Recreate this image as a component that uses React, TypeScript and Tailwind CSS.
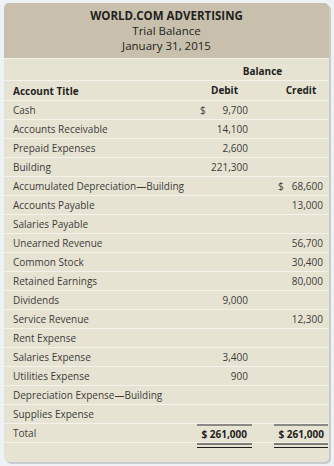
import React from 'react';

type Row = {
  title: string;
  debit?: string;
  credit?: string;
  debitSign?: boolean;
  creditSign?: boolean;
};

const rows: Row[] = [
  { title: 'Cash', debit: '9,700', debitSign: true },
  { title: 'Accounts Receivable', debit: '14,100' },
  { title: 'Prepaid Expenses', debit: '2,600' },
  { title: 'Building', debit: '221,300' },
  { title: 'Accumulated Depreciation—Building', credit: '68,600', creditSign: true },
  { title: 'Accounts Payable', credit: '13,000' },
  { title: 'Salaries Payable' },
  { title: 'Unearned Revenue', credit: '56,700' },
  { title: 'Common Stock', credit: '30,400' },
  { title: 'Retained Earnings', credit: '80,000' },
  { title: 'Dividends', debit: '9,000' },
  { title: 'Service Revenue', credit: '12,300' },
  { title: 'Rent Expense' },
  { title: 'Salaries Expense', debit: '3,400' },
  { title: 'Utilities Expense', debit: '900' },
  { title: 'Depreciation Expense—Building' },
  { title: 'Supplies Expense' },
];

// one money cell: optional "$" on the left, amount flush right
function Amount({ value, sign, pl }: { value?: string; sign?: boolean; pl: string }) {
  return (
    <div className={`flex items-center ${sign ? 'justify-between' : 'justify-end'} ${pl}`}>
      {sign && <span>$</span>}
      {value && <span>{value}</span>}
    </div>
  );
}

export default function App() {
  const rowBase = 'flex h-[19px] items-center border-b border-[#f4f2ea]';

  return (
    <div
      className="h-[466px] w-[334px] bg-[#eef2f5] pl-[4px] pr-[5px] pt-[3px] pb-[4px]"
      style={{ fontFamily: '"Open Sans", "Liberation Sans", sans-serif' }}
    >
      <div className="flex h-full flex-col overflow-hidden rounded-[5px] bg-[#e6e3d3] text-[10px] text-[#3d3b38] shadow-[2px_2px_0_#c9ccce]">
        {/* Title block */}
        <div className="flex h-[56px] flex-col items-center justify-center border-b border-[#f4f2ea] bg-[#c8c0ad] pb-[1px] text-[#231f20]">
          <div className="text-[11.5px] font-bold leading-[15px]">WORLD.COM ADVERTISING</div>
          <div className="text-[11.5px] leading-[15px]">Trial Balance</div>
          <div className="text-[11.5px] leading-[15px]">January 31, 2015</div>
        </div>

        {/* Balance heading */}
        <div className="flex h-[22px] items-center border-b border-[#f4f2ea] font-bold text-[#231f20]">
          <div className="flex-1" />
          <div className="w-[131px] pt-[3px] text-center">Balance</div>
          <div className="w-[1px]" />
        </div>

        {/* Column headings */}
        <div className="flex h-[20px] items-center border-b border-[#f4f2ea] font-bold text-[#231f20]">
          <div className="flex-1 pl-[9px] pt-[2px]">Account Title</div>
          <div className="w-[55px] text-center">Debit</div>
          <div className="w-[22px]" />
          <div className="w-[54px] text-center">Credit</div>
          <div className="w-[1px]" />
        </div>

        {rows.map((r) => (
          <div key={r.title} className={rowBase}>
            <div className="flex-1 pl-[9px]">{r.title}</div>
            <div className="w-[55px] pr-[4px]">
              <Amount value={r.debit} sign={r.debitSign} pl="pl-[3px]" />
            </div>
            <div className="w-[22px]" />
            <div className="w-[54px] pr-[5px]">
              <Amount value={r.credit} sign={r.creditSign} pl="pl-[4px]" />
            </div>
            <div className="w-[1px]" />
          </div>
        ))}

        {/* Totals */}
        <div className="flex h-[19px] items-stretch border-b border-[#f4f2ea]">
          <div className="flex flex-1 items-center pl-[9px]">Total</div>
          <div className="flex w-[55px] items-center justify-end border-t-2 border-[#8a8986] pr-[5px] font-bold text-[#231f20]">
            $ 261,000
          </div>
          <div className="w-[22px]" />
          <div className="flex w-[54px] items-center justify-end border-t-2 border-[#8a8986] pr-[4px] font-bold text-[#231f20]">
            $ 261,000
          </div>
          <div className="w-[1px]" />
        </div>

        {/* Double rule under totals */}
        <div className="flex flex-1">
          <div className="flex-1" />
          <div className="w-[55px]">
            <div className="h-[2px] bg-[#7d7c79]" />
            <div className="mt-[2px] h-[1px] bg-[#1a1a1a]" />
          </div>
          <div className="w-[22px]" />
          <div className="w-[54px]">
            <div className="h-[2px] bg-[#7d7c79]" />
            <div className="mt-[2px] h-[1px] bg-[#1a1a1a]" />
          </div>
          <div className="w-[1px]" />
        </div>
      </div>
    </div>
  );
}
